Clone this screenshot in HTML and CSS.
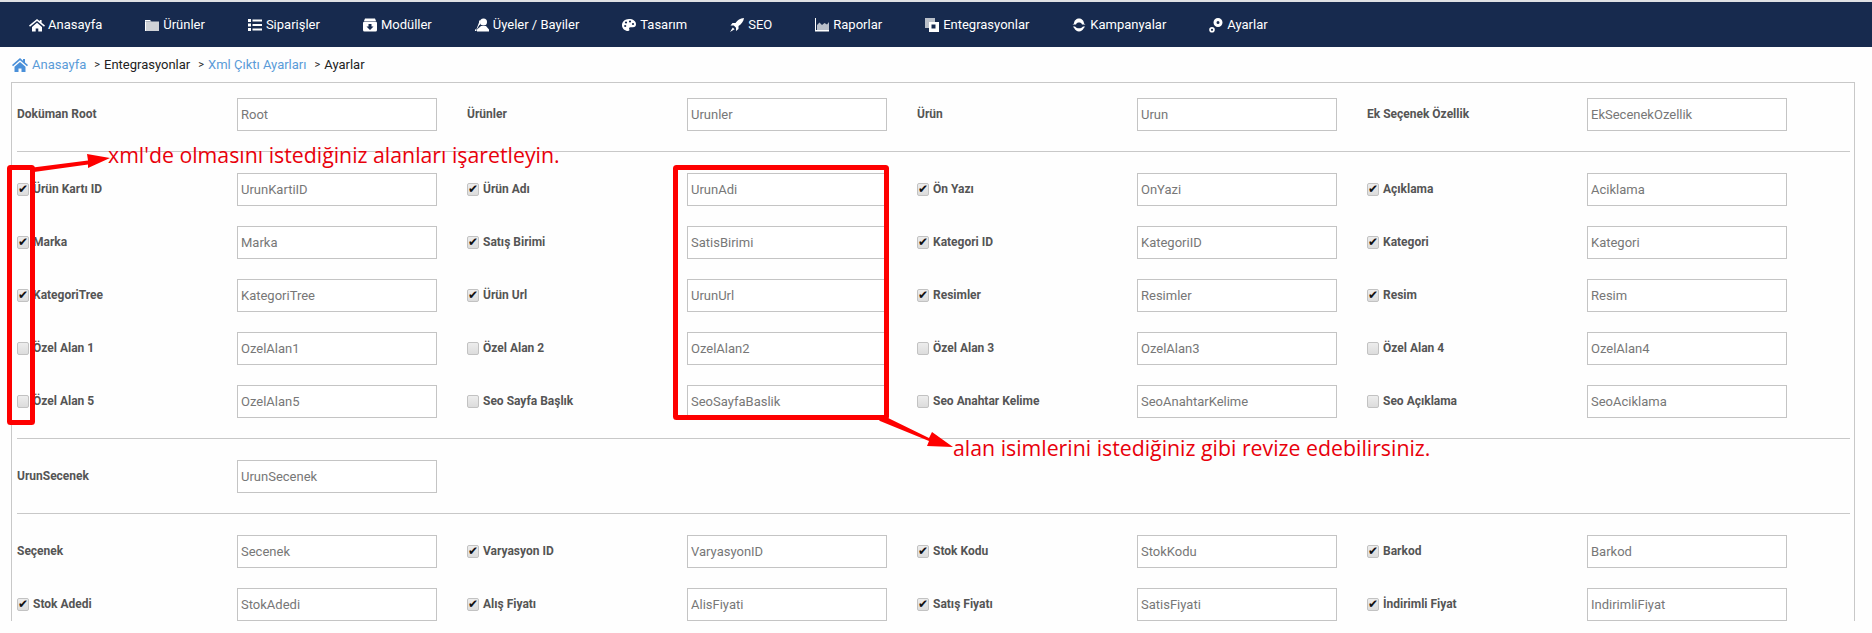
FILE: index.html
```html
<!DOCTYPE html>
<html lang="tr">
<head>
<meta charset="utf-8">
<title>Xml Çıktı Ayarları</title>
<link rel="stylesheet" href="styles.css">
</head>
<body>
<nav class="topnav">
  <a class="navitem"><svg class="navicon" viewBox="0 0 16 16"><path d="M8 2 0 8.600l1 1.100L8 4l7 5.700 1-1.100-3.400-2.900V3h-1.800v1.300z"/><path d="M3 10 8 5.800l5 4.200v4.500H9.300v-3H6.700v3H3z"/></svg>Anasayfa</a>
  <a class="navitem"><svg class="navicon" viewBox="0 0 16 16"><path fill="#fff" d="M1 3h5l1.500 1.500H1z"/><path fill="#cfd2d6" d="M1 4.500h14V14H1z"/><path fill="#fff" d="M1 4.500h1V14H1z"/></svg>Ürünler</a>
  <a class="navitem"><svg class="navicon" viewBox="0 0 16 16"><path d="M1 2h3v3H1zM1 6.500h3v3H1zM1 11h3v3H1zM5.500 2.500H15V4.500H5.500zM5.500 7H15V9H5.500zM5.500 11.500H15v2H5.500z"/></svg>Siparişler</a>
  <a class="navitem"><svg class="navicon" viewBox="0 0 16 16"><path d="M3 1.500h10l1 2.500H2z"/><rect x="1" y="4.500" width="14" height="10" rx="1.500"/><path fill="#172a4e" d="M6.500 7h3v2.500h2L8 13 4.500 9.500h2z"/></svg>Modüller</a>
  <a class="navitem"><svg class="navicon" viewBox="0 0 16 16"><circle cx="9.500" cy="5" r="3.500"/><path d="M7 9h5l3 3.500V14.500H3V12.500z"/><path d="M5 5.500a2 2 0 0 1 1.500-2.500v4L5 8.500 3 12 1 12.500v1.500h1.500V12z"/></svg>Üyeler / Bayiler</a>
  <a class="navitem"><svg class="navicon" viewBox="0 0 16 16"><path d="M8 2C4 2 1 4.800 1 8.200 1 11.600 4 14 7 14c1.600 0 1.700-1.200 1.200-2-.5-1 .2-1.800 1.300-1.800H12c1.900 0 3-1.200 3-3C15 4 12 2 8 2z"/><circle cx="5" cy="5.500" r="1.100" fill="#172a4e"/><circle cx="9" cy="4.500" r="1.100" fill="#172a4e"/><circle cx="12" cy="7" r="1.100" fill="#172a4e"/><circle cx="4.200" cy="9" r="1.100" fill="#172a4e"/></svg>Tasarım</a>
  <a class="navitem"><svg class="navicon" viewBox="0 0 16 16"><path d="M15 1c-4 .3-6.500 2-8.500 5H3.500L1.500 8.500h3.300l2.200 2.200V14l2.500-2V9c3-2 5-4.500 5.500-8z"/><path d="M3.800 10.500 5.600 12.300 1 15z"/></svg>SEO</a>
  <a class="navitem"><svg class="navicon" viewBox="0 0 16 16"><path fill="#b9bfc9" d="M3 13V8l2.500-2.500L8 8l2.500-2 2.500 1.500 2-2.500v8z"/><path d="M1 1h1v12h13v1.500H1z"/></svg>Raporlar</a>
  <a class="navitem"><svg class="navicon" viewBox="0 0 16 16"><path fill="#b9bfc9" d="M1 1h10v10H1z"/><path d="M5 5h10v10H5z"/><path fill="#172a4e" d="M7.500 7.500h4v4h-4z"/></svg>Entegrasyonlar</a>
  <a class="navitem"><svg class="navicon" viewBox="0 0 16 16"><path d="M3 6.500C3 3.500 5.500 1.500 8 1.500s5 2 5 5l1.500 1H11c-.5-1.500-1.500-2-3-2s-2.500.5-3 2H1.500z"/><path d="M2 9.500l2 0c1 1.300 2.500 1.800 4 1.800s3-.5 4-1.800l2 0c-.3.800-1 1.300-1.300 1.800C12 13.300 10 14.500 8 14.500s-4-1.200-4.700-3.200C3 10.800 2.300 10.300 2 9.500z"/></svg>Kampanyalar</a>
  <a class="navitem"><svg class="navicon" viewBox="0 0 16 16"><path fill-rule="evenodd" d="M10 1a4.500 4.500 0 1 1 0 9 4.500 4.500 0 0 1 0-9zm0 3a1.500 1.500 0 1 0 0 3 1.500 1.500 0 0 0 0-3z"/><path fill-rule="evenodd" d="M4 10a2.800 2.800 0 1 1 0 5.600A2.800 2.800 0 0 1 4 10zm0 1.700a1.100 1.100 0 1 0 0 2.200 1.100 1.100 0 0 0 0-2.200z"/></svg>Ayarlar</a>
</nav>

<div class="breadcrumb">
  <svg class="crumbicon" viewBox="0 0 16 14"><path d="M8 0 0 7l1 1.200L8 2.200l7 6L16 7l-3-2.600V1h-2v1.700z"/><path d="M2.500 8.700 8 4l5.500 4.700V14H9.500v-3.500h-3V14h-4z"/></svg>
  <a class="crumblink">Anasayfa</a><span class="sep">&gt;</span><span class="crumb">Entegrasyonlar</span><span class="sep">&gt;</span><a class="crumblink">Xml Çıktı Ayarları</a><span class="sep">&gt;</span><span class="crumb">Ayarlar</span>
</div>

<main class="panel">
  <section class="group">
    <div class="row">
      <label class="lbl">Doküman Root</label><input class="txt" value="Root">
      <label class="lbl">Ürünler</label><input class="txt" value="Urunler">
      <label class="lbl">Ürün</label><input class="txt" value="Urun">
      <label class="lbl">Ek Seçenek Özellik</label><input class="txt" value="EkSecenekOzellik">
    </div>
  </section>
  <hr class="rule">
  <section class="group">
    <div class="row">
      <label class="lbl"><input class="chk" type="checkbox" checked>Ürün Kartı ID</label><input class="txt" value="UrunKartiID">
      <label class="lbl"><input class="chk" type="checkbox" checked>Ürün Adı</label><input class="txt" value="UrunAdi">
      <label class="lbl"><input class="chk" type="checkbox" checked>Ön Yazı</label><input class="txt" value="OnYazi">
      <label class="lbl"><input class="chk" type="checkbox" checked>Açıklama</label><input class="txt" value="Aciklama">
    </div>
    <div class="row">
      <label class="lbl"><input class="chk" type="checkbox" checked>Marka</label><input class="txt" value="Marka">
      <label class="lbl"><input class="chk" type="checkbox" checked>Satış Birimi</label><input class="txt" value="SatisBirimi">
      <label class="lbl"><input class="chk" type="checkbox" checked>Kategori ID</label><input class="txt" value="KategoriID">
      <label class="lbl"><input class="chk" type="checkbox" checked>Kategori</label><input class="txt" value="Kategori">
    </div>
    <div class="row">
      <label class="lbl"><input class="chk" type="checkbox" checked>KategoriTree</label><input class="txt" value="KategoriTree">
      <label class="lbl"><input class="chk" type="checkbox" checked>Ürün Url</label><input class="txt" value="UrunUrl">
      <label class="lbl"><input class="chk" type="checkbox" checked>Resimler</label><input class="txt" value="Resimler">
      <label class="lbl"><input class="chk" type="checkbox" checked>Resim</label><input class="txt" value="Resim">
    </div>
    <div class="row">
      <label class="lbl"><input class="chk" type="checkbox">Özel Alan 1</label><input class="txt" value="OzelAlan1">
      <label class="lbl"><input class="chk" type="checkbox">Özel Alan 2</label><input class="txt" value="OzelAlan2">
      <label class="lbl"><input class="chk" type="checkbox">Özel Alan 3</label><input class="txt" value="OzelAlan3">
      <label class="lbl"><input class="chk" type="checkbox">Özel Alan 4</label><input class="txt" value="OzelAlan4">
    </div>
    <div class="row">
      <label class="lbl"><input class="chk" type="checkbox">Özel Alan 5</label><input class="txt" value="OzelAlan5">
      <label class="lbl"><input class="chk" type="checkbox">Seo Sayfa Başlık</label><input class="txt" value="SeoSayfaBaslik">
      <label class="lbl"><input class="chk" type="checkbox">Seo Anahtar Kelime</label><input class="txt" value="SeoAnahtarKelime">
      <label class="lbl"><input class="chk" type="checkbox">Seo Açıklama</label><input class="txt" value="SeoAciklama">
    </div>
  </section>
  <hr class="rule">
  <section class="group">
    <div class="row">
      <label class="lbl">UrunSecenek</label><input class="txt" value="UrunSecenek">
    </div>
  </section>
  <hr class="rule">
  <section class="group">
    <div class="row">
      <label class="lbl">Seçenek</label><input class="txt" value="Secenek">
      <label class="lbl"><input class="chk" type="checkbox" checked>Varyasyon ID</label><input class="txt" value="VaryasyonID">
      <label class="lbl"><input class="chk" type="checkbox" checked>Stok Kodu</label><input class="txt" value="StokKodu">
      <label class="lbl"><input class="chk" type="checkbox" checked>Barkod</label><input class="txt" value="Barkod">
    </div>
    <div class="row">
      <label class="lbl"><input class="chk" type="checkbox" checked>Stok Adedi</label><input class="txt" value="StokAdedi">
      <label class="lbl"><input class="chk" type="checkbox" checked>Alış Fiyatı</label><input class="txt" value="AlisFiyati">
      <label class="lbl"><input class="chk" type="checkbox" checked>Satış Fiyatı</label><input class="txt" value="SatisFiyati">
      <label class="lbl"><input class="chk" type="checkbox" checked>İndirimli Fiyat</label><input class="txt" value="IndirimliFiyat">
    </div>
  </section>
</main>

<svg class="marks" viewBox="0 0 1872 633" aria-hidden="true">
  <rect class="mark" x="9.500" y="167.500" width="23" height="255" rx="1"/>
  <rect class="mark" x="675.500" y="167.500" width="211" height="250" rx="1"/>
  <path class="markfill" d="M33 167.500 88 160.500 87 154 110 158 88 168 88 164.500 34 172z"/>
  <path class="markfill" d="M877 418 884 416 929 438 932 432 953 447 927 446 929 441 880 421z"/>
</svg>
<p class="note note-a">xml'de olmasını istediğiniz alanları işaretleyin.</p>
<p class="note note-b">alan isimlerini istediğiniz gibi revize edebilirsiniz.</p>
</body>
</html>
```

FILE: styles.css
```css
html, body {
  margin: 0;
  padding: 0;
  height: 633px;
  overflow: hidden;
  background: #fefefe;
  font-family: Roboto, "Liberation Sans", sans-serif;
}

.topnav {
  display: flex;
  align-items: center;
  height: 45px;
  margin-top: 2px;
  padding-left: 8px;
  background: #172a4e;
  box-shadow: 0 -2px 0 #dfe1e4;
}

.navitem {
  display: flex;
  align-items: center;
  padding: 0 21px;
  color: #fff;
  font-size: 13px;
  white-space: nowrap;
}

.navicon {
  width: 16px;
  height: 16px;
  margin-right: 3px;
  fill: #fff;
  flex: none;
}

.breadcrumb {
  display: flex;
  align-items: center;
  height: 35px;
  padding-left: 12px;
  font-size: 13px;
  color: #222;
}

.crumbicon {
  width: 16px;
  height: 14px;
  margin-right: 4px;
  fill: #4a90d9;
}

.crumblink {
  color: #5a9bd8;
}

.sep {
  margin: 0 4px 0 8px;
  font-size: 11px;
}

.panel {
  margin: 0 17px 0 11px;
  padding: 15px 4px 0 5px;
  border: 1px solid #c8c8c8;
  border-bottom: 0;
}

.group {
  display: grid;
  row-gap: 20px;
}

.row {
  display: grid;
  grid-template-columns: repeat(4, 220px 230px);
  align-items: center;
  height: 33px;
}

.lbl {
  display: flex;
  align-items: center;
  margin-top: -1px;
  font-size: 12px;
  font-weight: 700;
  color: #555;
  white-space: nowrap;
}

.txt {
  box-sizing: border-box;
  width: 200px;
  height: 33px;
  padding: 0 3px;
  border: 1px solid #c4c4c4;
  border-radius: 0;
  background: #fff;
  color: #777;
  font: 400 13px Roboto, sans-serif;
  outline: 0;
}

.chk {
  appearance: none;
  box-sizing: border-box;
  position: relative;
  width: 12px;
  height: 13px;
  margin: 0 4px 0 0;
  border: 1px solid #c2c2c2;
  border-radius: 2px;
  background: linear-gradient(#ededed, #dcdcdc);
  flex: none;
}

.chk:checked::after {
  content: "✔";
  position: absolute;
  left: 0;
  top: 0;
  width: 10px;
  height: 11px;
  color: #111;
  font: 12px/11px "DejaVu Sans", sans-serif;
  text-align: center;
}

.rule {
  height: 1px;
  margin: 20px 0 21px;
  border: 0;
  background: #c8c8c8;
}

.marks {
  position: absolute;
  left: 0;
  top: 0;
  width: 1872px;
  height: 633px;
  pointer-events: none;
}

.mark {
  fill: none;
  stroke: #fe0000;
  stroke-width: 5;
}

.markfill {
  fill: #fe0000;
}

.note {
  position: absolute;
  margin: 0;
  color: #e8000b;
  font: 400 21.300px/28px "Open Sans", sans-serif;
  white-space: nowrap;
}

.note-a {
  left: 108px;
  top: 141px;
}

.note-b {
  left: 953px;
  top: 434px;
}
```
